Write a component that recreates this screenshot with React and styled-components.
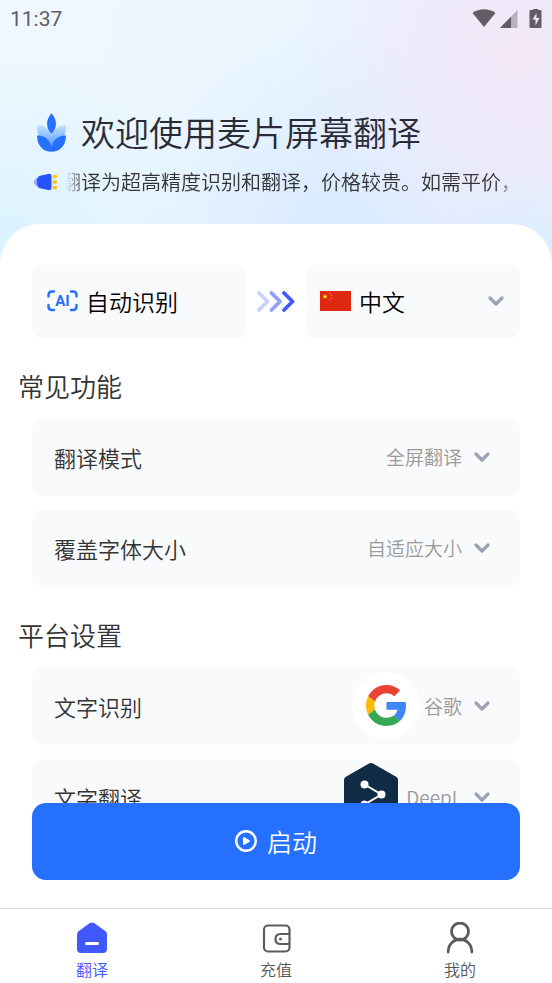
import { useState } from "react";
import styled, { createGlobalStyle } from "styled-components";

const tabs = [
    { id: "translate", label: "翻译", Icon: HomeIcon },
    { id: "recharge", label: "充值", Icon: WalletIcon },
    { id: "mine", label: "我的", Icon: UserIcon },
];

export default function App() {
    const [tab, setTab] = useState("translate");

    return (
        <Page>
            <GlobalStyle />
            <StatusBar>
                <Clock>11:37</Clock>
                <StatusIcons />
            </StatusBar>
            <Header>
                <TitleRow>
                    <WheatLogo />
                    <h1>欢迎使用麦片屏幕翻译</h1>
                </TitleRow>
                <NoticeRow>
                    <HornIcon />
                    <Notice>翻译为超高精度识别和翻译，价格较贵。如需平价，</Notice>
                </NoticeRow>
            </Header>
            <Sheet>
                <Scroll>
                    <Languages>
                        <SourceLanguage type="button">
                            <ScanIcon />
                            自动识别
                        </SourceLanguage>
                        <Arrows />
                        <TargetLanguage>
                            <Flag />
                            <Picker $wide>
                                <select aria-label="目标语言">
                                    <option>中文</option>
                                </select>
                                <Chevron />
                            </Picker>
                        </TargetLanguage>
                    </Languages>
                    <Section title="常见功能">
                        <Setting id="mode" label="翻译模式" value="全屏翻译" />
                        <Setting id="size" label="覆盖字体大小" value="自适应大小" />
                    </Section>
                    <Section title="平台设置">
                        <Setting id="ocr" label="文字识别" value="谷歌">
                            <Round>
                                <GoogleLogo />
                            </Round>
                        </Setting>
                        <Setting id="engine" label="文字翻译" value="DeepL">
                            <DeepLLogo />
                        </Setting>
                    </Section>
                </Scroll>
                <StartButton type="button">
                    <PlayIcon />
                    启动
                </StartButton>
                <TabBar>
                    {tabs.map(({ id, label, Icon }) => (
                        <Tab key={id} type="button" $active={tab === id} onClick={() => setTab(id)}>
                            <Icon />
                            {label}
                        </Tab>
                    ))}
                </TabBar>
            </Sheet>
        </Page>
    );
}

function Section({ title, children }) {
    return (
        <section>
            <SectionTitle>{title}</SectionTitle>
            <Rows>{children}</Rows>
        </section>
    );
}

function Setting({ id, label, value, children }) {
    return (
        <Row>
            <label htmlFor={id}>{label}</label>
            <RowValue>
                {children}
                <Picker>
                    <select id={id}>
                        <option>{value}</option>
                    </select>
                    <Chevron />
                </Picker>
            </RowValue>
        </Row>
    );
}

function StatusIcons() {
    return (
        <svg width="70" height="20" viewBox="0 0 70 20" fill="#615d65">
            <path d="M0.500 4C7 -1 17 -1 23.500 4L12 18Z" />
            <path d="M45.500 1V19H28Z" opacity="0.4" />
            <path d="M39 7.700V19H28Z" />
            <path
                fillRule="evenodd"
                d="M61 0h5v1h2.500q1 0 1 1v16q0 1-1 1h-10q-1 0-1-1v-16q0-1 1-1h2.500zM64.500 4l-4 6.500h3v6l4-7.500h-3z"
            />
        </svg>
    );
}

function WheatLogo() {
    return (
        <svg width="29" height="39" viewBox="0 0 88 117">
            <defs>
                <linearGradient id="leaf" x1="0" y1="0" x2="0" y2="1">
                    <stop offset="0" stopColor="#c3e3ff" />
                    <stop offset="1" stopColor="#4a90ff" />
                </linearGradient>
            </defs>
            <path
                fill="url(#leaf)"
                d="M0 36C20 36 36 46 44 66C52 46 68 36 88 36C88 50 87 62 80 74L44 110L8 74C1 62 0 50 0 36Z"
            />
            <path fill="#2670ff" d="M0 68C24 67 41 82 44 106C47 82 64 67 88 68C88 98 68 117 44 117C20 117 0 98 0 68Z" />
            <path fill="#2670ff" d="M44 0C26 20 26 44 44 63C62 44 62 20 44 0Z" />
        </svg>
    );
}

function HornIcon() {
    return (
        <svg width="24" height="18" viewBox="0 0 24 18">
            <path d="M4 4.500Q0 6 0 9T4 13.500Z" fill="#93a5ff" />
            <path d="M5 3L14 1Q17.500 0.300 17.500 3V15Q17.500 17.700 14 17L5 15Q3 13 3 9T5 3Z" fill="#2653ff" />
            <g stroke="#ffc51f" strokeWidth="3.400" strokeLinecap="round">
                <path d="M20 3.500h1.500M20 9h1.500M20 14.500h1.500" />
            </g>
        </svg>
    );
}

function ScanIcon() {
    return (
        <svg width="31" height="22" viewBox="0 0 31 22">
            <path
                d="M7 1.500H5Q1.500 1.500 1.500 5V6.500M24 1.500h2q3.500 0 3.500 3.500v1.500M1.500 15v1.500Q1.500 20 5 20H7M29.500 15v1.500q0 3.500-3.500 3.500h-2"
                fill="none"
                stroke="#2670ff"
                strokeWidth="2.400"
                strokeLinecap="round"
            />
            <text x="15.500" y="16" textAnchor="middle" fontFamily="Roboto, sans-serif" fontSize="15" fontWeight="700" fill="#2670ff">
                AI
            </text>
        </svg>
    );
}

function Arrows() {
    return (
        <svg width="38" height="21" viewBox="0 0 38 21" fill="none" strokeWidth="3.800" strokeLinecap="round" strokeLinejoin="round">
            <path d="M2 2l8.500 8.500L2 19" stroke="#c8d0ff" />
            <path d="M14.500 2l8.500 8.500L14.500 19" stroke="#929fff" />
            <path d="M27 2l8.500 8.500L27 19" stroke="#4258ff" />
        </svg>
    );
}

function Flag() {
    return (
        <svg width="31" height="20" viewBox="0 0 31 20">
            <path d="M0 0h31v20H0z" fill="#de2910" />
            <g fill="#ffde00">
                <path d="M5 2.800l0.700 2h2.100L6.100 6l0.600 2L5 6.800 3.300 8l0.600-2L2.200 4.800h2.100z" />
                <circle cx="9.500" cy="2.500" r="0.600" />
                <circle cx="11.500" cy="4.500" r="0.600" />
                <circle cx="11.500" cy="7" r="0.600" />
                <circle cx="9.500" cy="9" r="0.600" />
            </g>
        </svg>
    );
}

function Chevron() {
    return (
        <svg width="16" height="10" viewBox="0 0 16 10">
            <path d="M2 2l6 6 6-6" fill="none" stroke="#9ca1b3" strokeWidth="3.200" strokeLinecap="round" strokeLinejoin="round" />
        </svg>
    );
}

function GoogleLogo() {
    return (
        <svg width="40" height="41" viewBox="0 0 47 48">
            <path fill="#ea4335" d="M24 9.500c3.540 0 6.710 1.220 9.210 3.600l6.850-6.850C35.900 2.380 30.470 0 24 0 14.620 0 6.510 5.380 2.560 13.220l7.980 6.190C12.430 13.720 17.740 9.500 24 9.500z" />
            <path fill="#4285f4" d="M46.980 24.550c0-1.570-.15-3.090-.38-4.550H24v9.020h12.940c-.58 2.960-2.260 5.480-4.780 7.180l7.730 6c4.510-4.180 7.090-10.360 7.090-17.650z" />
            <path fill="#fbbc05" d="M10.530 28.590c-.48-1.450-.76-2.990-.76-4.590s.27-3.140.76-4.590l-7.980-6.190C.92 16.460 0 20.120 0 24c0 3.880.92 7.540 2.560 10.780l7.970-6.190z" />
            <path fill="#34a853" d="M24 48c6.480 0 11.930-2.130 15.890-5.810l-7.730-6c-2.150 1.450-4.920 2.300-8.160 2.300-6.260 0-11.570-4.220-13.470-9.910l-7.980 6.190C6.510 42.620 14.620 48 24 48z" />
        </svg>
    );
}

function DeepLLogo() {
    return (
        <svg width="54" height="68" viewBox="0 0 54 68">
            <path d="M25 0.500q2-1 4 0L52.500 14Q54 15 54 17V43q0 2-1.500 3L38 54.500V68L27 60.500 1.500 46Q0 45 0 43V17q0-2 1.500-3Z" fill="#102b46" />
            <path d="M20.500 21.500l17 10-17 10" fill="none" stroke="#fff" strokeWidth="2" />
            <g fill="#fff">
                <circle cx="20.500" cy="21.500" r="4" />
                <circle cx="37.500" cy="31.500" r="4" />
                <circle cx="20.500" cy="41.500" r="4" />
            </g>
        </svg>
    );
}

function PlayIcon() {
    return (
        <svg width="22" height="22" viewBox="0 0 22 22">
            <circle cx="11" cy="11" r="9.800" fill="none" stroke="#fff" strokeWidth="2.400" />
            <path d="M9 8l5 3-5 3z" fill="#fff" stroke="#fff" strokeWidth="2" strokeLinejoin="round" />
        </svg>
    );
}

function HomeIcon() {
    return (
        <svg width="32" height="32" viewBox="0 0 32 32">
            <path d="M13.500 1.200q2.500-1.500 5 0l11 8Q31 10.500 31 12.500V27q0 4-4 4H5q-4 0-4-4V12.500q0-2 1.500-3.300Z" fill="#4258ff" />
            <path d="M10.500 21.500h11" stroke="#fff" strokeWidth="3" strokeLinecap="round" />
        </svg>
    );
}

function WalletIcon() {
    return (
        <svg width="32" height="32" viewBox="0 0 32 32" fill="none" stroke="#5c5c5c" strokeWidth="2.200">
            <rect x="4" y="3.500" width="25.500" height="26" rx="4" />
            <path d="M29.500 12H20.500q-5 0-5 5t5 5h9" />
            <circle cx="20.500" cy="17" r="1.500" fill="#5c5c5c" stroke="none" />
        </svg>
    );
}

function UserIcon() {
    return (
        <svg width="32" height="32" viewBox="0 0 32 32" fill="none" stroke="#5c5c5c" strokeWidth="2.800" strokeLinecap="round">
            <circle cx="16" cy="9.500" r="8.500" />
            <path d="M4.200 30C4.500 13 27.500 13 27.800 30" />
        </svg>
    );
}

const GlobalStyle = createGlobalStyle`
    * {
        box-sizing: border-box;
    }
    body {
        margin: 0;
        font-family: 'Noto Sans CJK SC', sans-serif;
        font-weight: 350;
    }
    h1, h2, p {
        margin: 0;
        font-weight: inherit;
    }
    button, select {
        font: inherit;
        color: inherit;
        border: none;
        background: none;
        padding: 0;
        cursor: pointer;
    }
    svg {
        display: block;
        flex-shrink: 0;
    }
`;
const Page = styled.div`
    height: 100vh;
    display: flex;
    flex-direction: column;
    background:
        radial-gradient(circle at 100% 290px, #d6efff 0, #d6efff00 130px),
        radial-gradient(circle at 94% 50px, #f3e8f8 0, #f3e8f800 220px),
        radial-gradient(circle at 0% 270px, #d8f2ff 0, #d8f2ff00 230px),
        radial-gradient(circle at 60% 240px, #d8eaff 0, #d8eaff00 220px),
        linear-gradient(100deg, #f0f8ff 0%, #ebf6ff 40%, #e6ecfc 75%, #efebfb 100%);
`;
const StatusBar = styled.div`
    height: 38px;
    padding: 0 10px;
    display: flex;
    align-items: center;
    justify-content: space-between;
`;
const Clock = styled.span`
    font-family: Roboto, sans-serif;
    font-weight: 400;
    font-size: 21px;
    line-height: 38px;
    color: #615d65;
`;
const Header = styled.header`
    height: 186px;
    padding: 69px 34px 0;
    display: flex;
    flex-direction: column;
`;
const TitleRow = styled.div`
    display: flex;
    align-items: center;
    gap: 15px;
    padding-left: 3px;
    h1 {
        font-size: 34px;
        line-height: 50px;
        color: #292b38;
        white-space: nowrap;
    }
`;
const NoticeRow = styled.div`
    display: flex;
    align-items: center;
    gap: 8px;
    height: 50px;
`;
const Notice = styled.p`
    flex: 1;
    min-width: 0;
    overflow: hidden;
    white-space: nowrap;
    text-indent: -5px;
    font-size: 20px;
    line-height: 30px;
    color: #333;
    mask-image: linear-gradient(90deg, transparent 0, #000 18px, #000 calc(100% - 22px), transparent 100%);
`;
const Sheet = styled.main`
    flex: 1;
    min-height: 0;
    display: flex;
    flex-direction: column;
    background-color: #fff;
    border-radius: 40px 40px 0 0;
`;
const Scroll = styled.div`
    flex: 1;
    min-height: 0;
    overflow-y: auto;
    scrollbar-width: none;
    padding-top: 41px;
`;
const Languages = styled.div`
    display: flex;
    align-items: center;
    gap: 10px;
    padding: 0 32px;
`;
const SourceLanguage = styled.button`
    flex: 1;
    height: 73px;
    padding: 0 16px 2px 15px;
    display: flex;
    align-items: center;
    gap: 8px;
    border-radius: 10px;
    background-color: #f9fafc;
    font-size: 23px;
    line-height: 36px;
    color: #000;
`;
const TargetLanguage = styled(SourceLanguage).attrs({ as: "div" })``;
const Picker = styled.div`
    flex: ${({ $wide }) => ($wide ? 1 : "none")};
    display: grid;
    align-items: center;
    select {
        grid-area: 1 / 1;
        appearance: none;
        field-sizing: content;
        line-height: 36px;
        padding-right: 28px;
    }
    svg {
        grid-area: 1 / 1;
        justify-self: end;
        pointer-events: none;
    }
`;
const SectionTitle = styled.h2`
    padding: 28px 18px 13px;
    font-size: 26px;
    line-height: 40px;
    color: #333;
`;
const Rows = styled.div`
    display: flex;
    flex-direction: column;
    gap: 14px;
    padding: 0 32px;
`;
const Row = styled.div`
    height: 77px;
    padding: 0 30px 2px 22px;
    display: flex;
    align-items: center;
    justify-content: space-between;
    border-radius: 10px;
    background-color: #f9fafc;
    font-size: 22px;
    line-height: 36px;
    color: #333;
`;
const RowValue = styled.div`
    display: flex;
    align-items: center;
    gap: 4px;
    font-size: 19px;
    color: #999;
    > svg {
        margin-right: 4px;
    }
`;
const Round = styled.span`
    width: 68px;
    height: 68px;
    display: flex;
    align-items: center;
    justify-content: center;
    border-radius: 50%;
    background-color: #fff;
`;
const StartButton = styled.button`
    height: 77px;
    margin: 0 32px 28px;
    padding-bottom: 2px;
    flex-shrink: 0;
    display: flex;
    align-items: center;
    justify-content: center;
    gap: 10px;
    border-radius: 14px;
    background-color: #2670ff;
    color: #fff;
    font-size: 25px;
    line-height: 36px;
`;
const TabBar = styled.nav`
    height: 75px;
    flex-shrink: 0;
    display: flex;
    border-top: 1px solid #dcdcdc;
`;
const Tab = styled.button`
    flex: 1;
    display: flex;
    flex-direction: column;
    align-items: center;
    padding-top: 13px;
    gap: 3px;
    font-size: 16px;
    line-height: 24px;
    color: ${({ $active }) => ($active ? "#4258ff" : "#555")};
`;
